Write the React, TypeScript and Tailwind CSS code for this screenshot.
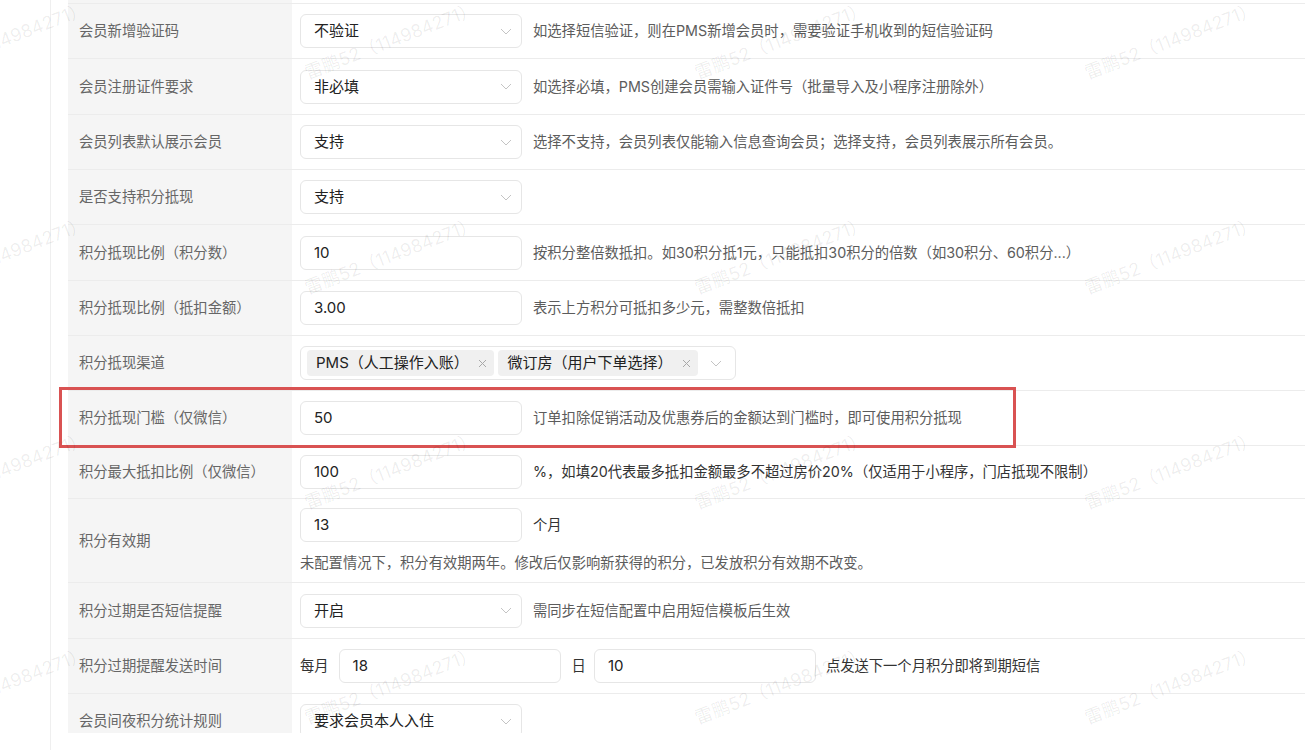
import React from "react";

const Chevron = () => (
  <svg width="12" height="7" viewBox="0 0 12 7" fill="none" className="shrink-0">
    <polyline points="1,1 6,6 11,1" stroke="#c4c4c4" strokeWidth="1" fill="none" />
  </svg>
);

const Close = () => (
  <svg width="9" height="9" viewBox="0 0 9 9" fill="none" className="shrink-0">
    <line x1="1" y1="1" x2="8" y2="8" stroke="#a8a8a8" strokeWidth="1" />
    <line x1="8" y1="1" x2="1" y2="8" stroke="#a8a8a8" strokeWidth="1" />
  </svg>
);

const Select = ({ value }: { value: string }) => (
  <div className="flex h-[34px] w-[222px] shrink-0 items-center justify-between rounded-[6px] border border-[#e6e6e6] bg-white pl-[13px] pr-[9px] text-[15px] text-[#222]">
    <span>{value}</span>
    <Chevron />
  </div>
);

const Input = ({ value }: { value: string }) => (
  <div className="flex h-[34px] w-[222px] shrink-0 items-center rounded-[6px] border border-[#e6e6e6] bg-white pl-[13px] text-[15px] text-[#222]">
    <span>{value}</span>
  </div>
);

const Desc = ({ children, dark }: { children: React.ReactNode; dark?: boolean }) => (
  <span className={dark ? "ml-[11px] text-[14.3px] text-[#333]" : "ml-[11px] text-[14.3px] text-[#5c5c5c]"}>{children}</span>
);

const Row = ({
  label,
  children,
  h,
  tall,
}: {
  label: string;
  children: React.ReactNode;
  h: string;
  tall?: boolean;
}) => (
  <div className={`flex border-t border-[#ececec] ${h}`}>
    <div className="flex w-[224px] shrink-0 items-center bg-[#f5f5f5] pl-[11px] text-[14.3px] text-[#666]">{label}</div>
    <div className={tall ? "flex flex-1 flex-col justify-start pl-[8px] pt-[9px]" : "flex flex-1 items-center pl-[8px]"}>
      {children}
    </div>
  </div>
);

const Tag = ({ text }: { text: string }) => (
  <div className="flex h-[26px] items-center gap-[10px] rounded-[4px] bg-[#f0f0f0] pl-[9px] pr-[7px] text-[15px] text-[#222]">
    <span>{text}</span>
    <Close />
  </div>
);

export default function App() {
  const wmX = [-80, 310, 700, 1090];
  const wmY = [85, 300, 515, 730];
  return (
    <div className="relative h-[750px] w-[1305px] overflow-hidden bg-white font-['Inter','Noto_Sans_CJK_SC',sans-serif] leading-[20px]">
      <div className="ml-[50px] h-full border-l border-[#efefef] pl-[17px]">
        <div className="h-[733px] overflow-hidden">
          <div className="flex h-[3px]">
            <div className="w-[224px] bg-[#f5f5f5]" />
          </div>
          <Row label="会员新增验证码" h="h-[55px]">
            <Select value="不验证" />
            <Desc>如选择短信验证，则在PMS新增会员时，需要验证手机收到的短信验证码</Desc>
          </Row>
          <Row label="会员注册证件要求" h="h-[56px]">
            <Select value="非必填" />
            <Desc>如选择必填，PMS创建会员需输入证件号（批量导入及小程序注册除外）</Desc>
          </Row>
          <Row label="会员列表默认展示会员" h="h-[55px]">
            <Select value="支持" />
            <Desc>选择不支持，会员列表仅能输入信息查询会员；选择支持，会员列表展示所有会员。</Desc>
          </Row>
          <Row label="是否支持积分抵现" h="h-[55px]">
            <Select value="支持" />
          </Row>
          <Row label="积分抵现比例（积分数）" h="h-[56px]">
            <Input value="10" />
            <Desc>按积分整倍数抵扣。如30积分抵1元，只能抵扣30积分的倍数（如30积分、60积分...）</Desc>
          </Row>
          <Row label="积分抵现比例（抵扣金额）" h="h-[55px]">
            <Input value="3.00" />
            <Desc>表示上方积分可抵扣多少元，需整数倍抵扣</Desc>
          </Row>
          <Row label="积分抵现渠道" h="h-[55px]">
            <div className="flex h-[34px] w-[436px] items-center gap-[4px] rounded-[6px] border border-[#e6e6e6] bg-white pl-[6px] pr-[13px]">
              <Tag text="PMS（人工操作入账）" />
              <Tag text="微订房（用户下单选择）" />
              <div className="ml-[8px]">
                <Chevron />
              </div>
            </div>
          </Row>
          <Row label="积分抵现门槛（仅微信）" h="h-[55px]">
            <Input value="50" />
            <Desc>订单扣除促销活动及优惠券后的金额达到门槛时，即可使用积分抵现</Desc>
          </Row>
          <Row label="积分最大抵扣比例（仅微信）" h="h-[53px]">
            <Input value="100" />
            <Desc dark>%，如填20代表最多抵扣金额最多不超过房价20%（仅适用于小程序，门店抵现不限制）</Desc>
          </Row>
          <Row label="积分有效期" h="h-[84px]" tall>
            <div className="flex items-center">
              <Input value="13" />
              <Desc dark>个月</Desc>
            </div>
            <div className="mt-[11px] text-[14.3px] text-[#5c5c5c]">
              未配置情况下，积分有效期两年。修改后仅影响新获得的积分，已发放积分有效期不改变。
            </div>
          </Row>
          <Row label="积分过期是否短信提醒" h="h-[56px]">
            <Select value="开启" />
            <Desc>需同步在短信配置中启用短信模板后生效</Desc>
          </Row>
          <Row label="积分过期提醒发送时间" h="h-[55px]">
            <span className="text-[14.3px] text-[#333]">每月</span>
            <div className="ml-[10px]">
              <Input value="18" />
            </div>
            <span className="ml-[11px] text-[14.3px] text-[#333]">日</span>
            <div className="ml-[8px]">
              <Input value="10" />
            </div>
            <span className="ml-[10px] text-[14.3px] text-[#333]">点发送下一个月积分即将到期短信</span>
          </Row>
          <Row label="会员间夜积分统计规则" h="h-[55px]">
            <Select value="要求会员本人入住" />
          </Row>
        </div>
      </div>

      <div className="pointer-events-none absolute left-[59px] top-[387px] h-[61px] w-[957px] border-[3px] border-[#d95252]" />

      {wmY.map((y) =>
        wmX.map((x) => (
          <div
            key={`${x}-${y}`}
            className="pointer-events-none absolute h-[24px] origin-bottom-left -rotate-[21deg] whitespace-nowrap text-[18px] leading-[24px] text-black/[0.07]"
            style={{ left: x, top: y - 24 }}
          >
            雷鹏52（114984271）
          </div>
        ))
      )}
    </div>
  );
}
